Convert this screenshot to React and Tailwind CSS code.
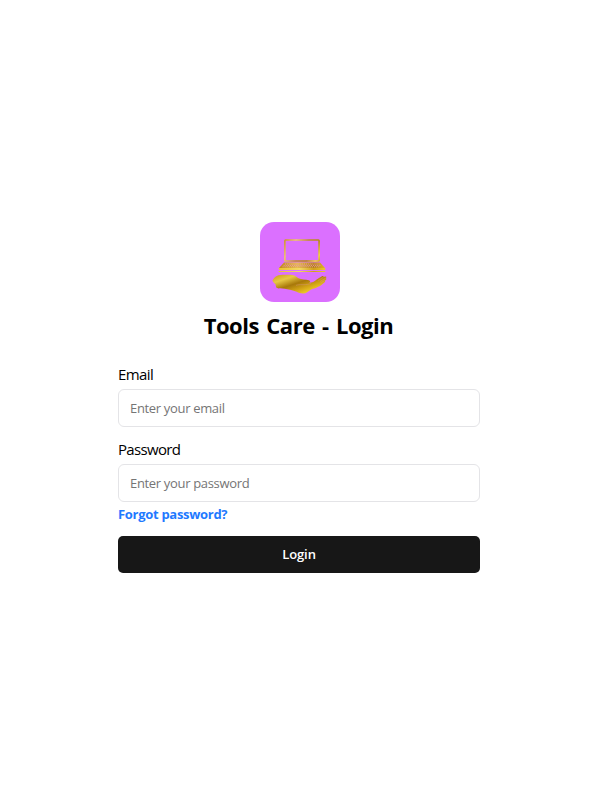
const Logo = () => (
  <svg width="80" height="80" viewBox="0 0 80 80" fill="none" className="block">
    <defs>
      <linearGradient id="screen" gradientUnits="userSpaceOnUse" x1="24" y1="17" x2="60" y2="40">
        <stop offset="0" stopColor="#c8921f" />
        <stop offset="0.25" stopColor="#f0c96a" />
        <stop offset="0.5" stopColor="#c08d2c" />
        <stop offset="0.72" stopColor="#b58a10" />
        <stop offset="0.9" stopColor="#f1dc32" />
        <stop offset="1" stopColor="#c8a010" />
      </linearGradient>
      <linearGradient id="keys" x1="0" y1="0" x2="1" y2="0">
        <stop offset="0" stopColor="#c08a14" />
        <stop offset="0.4" stopColor="#e9c240" />
        <stop offset="0.75" stopColor="#b8860f" />
        <stop offset="1" stopColor="#e2b81f" />
      </linearGradient>
      <linearGradient id="palm" gradientUnits="userSpaceOnUse" x1="24" y1="49" x2="33" y2="76">
        <stop offset="0" stopColor="#c99a16" />
        <stop offset="0.28" stopColor="#e8c945" />
        <stop offset="0.55" stopColor="#a8780a" />
        <stop offset="0.78" stopColor="#d3a516" />
        <stop offset="1" stopColor="#f0d02d" />
      </linearGradient>
      <linearGradient id="edge" x1="0" y1="0" x2="1" y2="0">
        <stop offset="0" stopColor="#e9c531" />
        <stop offset="0.45" stopColor="#f2d866" />
        <stop offset="0.75" stopColor="#d0a01c" />
        <stop offset="1" stopColor="#ecc62d" />
      </linearGradient>
    </defs>
    <rect width="80" height="80" rx="14" fill="#db70ff" />
    {/* Laptop screen */}
    <rect x="24.9" y="18" width="34.2" height="21" rx="0.7" stroke="url(#screen)" strokeWidth="1.6" />
    {/* Keyboard */}
    <path d="M24 40.4H60L65.2 46.3H18.8Z" fill="url(#keys)" />
    <path d="M25 42H59.5M23.6 43.4H60.6M22.5 44.8H60" stroke="#e58ad2" strokeWidth="0.8" strokeDasharray="1.1 1" />
    <path d="M18.7 46H65.3V47.2L64.6 48H19.4L18.7 47.2Z" fill="url(#edge)" />
    <rect x="18.7" y="49" width="46.6" height="1" fill="url(#edge)" />
    {/* Hand */}
    <path
      d="M12.5 58.2C14 55.5 16 54 18.5 53.2C23 52.8 28 52.7 32.5 53C35 53.4 36.6 54.8 38.5 56.2C41.5 57.3 46 57.5 48.8 58.2C50.6 58.8 50.6 60.2 49 60.8C52 60.7 54.5 59.6 57 57.2L62.3 54.1C63.5 53.7 64 54.3 63.2 55L65.6 54.4C66.8 54.5 66.6 55.5 65.4 56.1L66.2 56.6C66.8 57.4 65.8 58.2 64.8 58.9L65.2 59.8C62.5 62.5 58.5 65.8 52 67C48.5 69.2 46.2 71.8 42.8 71.6C38 71.2 35.5 68.7 30 67.8C25 67 21 65.8 18.5 66.6L16.2 65.5L15.5 62.2C14.5 61.2 12.5 60 12.5 58.2Z"
      fill="url(#palm)"
    />
    <path d="M36 63.4C38 62.6 40 62.6 43 62.7C46 62.8 49 62.2 51 61.4M58.2 58.7L63.3 55.2M60 59.5L65.3 56.4M60.8 60.6L64.8 58.6" stroke="#dc96a0" strokeWidth="0.35" />
  </svg>
);

const inputClass =
  "block w-full h-[38px] rounded-md border border-[#e4e4e7] bg-white px-[11px] text-[13px] tracking-[-0.33px] text-black placeholder:text-[#757575] outline-none";

const App = () => {
  return (
    <div className="min-h-screen bg-white flex flex-col items-center justify-center pb-[5px] text-black font-['Open_Sans','Noto_Sans',sans-serif]">
      <Logo />
      <h1 className="mt-[7px] mr-[3px] text-[22px] leading-8 font-bold tracking-[-0.45px] [word-spacing:2px] whitespace-nowrap">
        Tools Care - Login
      </h1>

      <form className="w-[362px] mt-[21px] mr-0.5" onSubmit={(e) => e.preventDefault()}>
        <label htmlFor="email" className="block h-[27px] text-[15px] leading-6 tracking-[-0.6px]">Email</label>
        <input id="email" type="email" placeholder="Enter your email" className={inputClass} />

        <label htmlFor="password" className="block mt-[10px] h-[27px] text-[15px] leading-6 tracking-[-0.68px]">Password</label>
        <input id="password" type="password" placeholder="Enter your password" className={inputClass} />

        <a href="#" className="block w-fit mt-[3px] text-[13px] leading-[19px] font-bold tracking-[-0.3px] text-[#1f7aff]">
          Forgot password?
        </a>

        <button
          type="submit"
          className="block w-full h-[37px] mt-3 rounded-[5px] bg-[#171717] text-[13px] font-semibold tracking-[-0.1px] text-white"
        >
          Login
        </button>
      </form>
    </div>
  );
};

export default App;
